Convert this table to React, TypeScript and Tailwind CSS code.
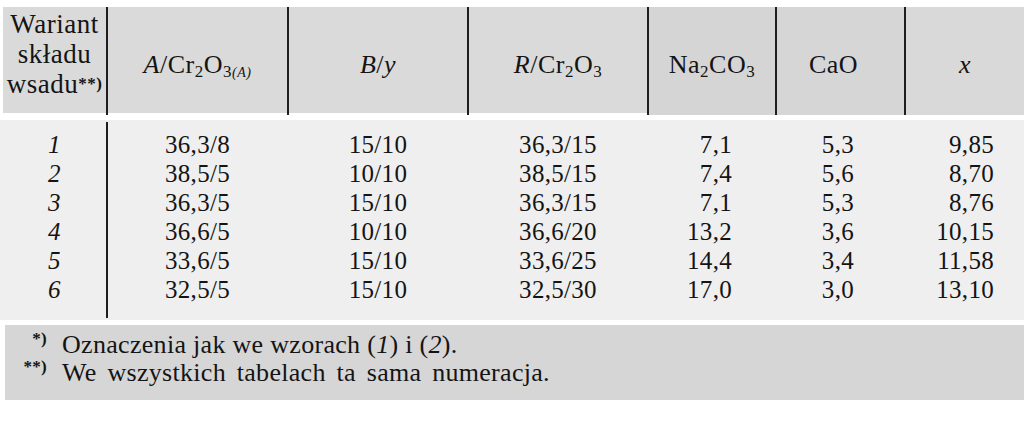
import React from "react";

const rows = [
  ["1", "36,3/8", "15/10", "36,3/15", "7,1", "5,3", "9,85"],
  ["2", "38,5/5", "10/10", "38,5/15", "7,4", "5,6", "8,70"],
  ["3", "36,3/5", "15/10", "36,3/15", "7,1", "5,3", "8,76"],
  ["4", "36,6/5", "10/10", "36,6/20", "13,2", "3,6", "10,15"],
  ["5", "33,6/5", "15/10", "33,6/25", "14,4", "3,4", "11,58"],
  ["6", "32,5/5", "15/10", "32,5/30", "17,0", "3,0", "13,10"],
];

const Sub = ({ children }: { children: React.ReactNode }) => (
  <sub className="text-[17px] relative bottom-[-0.28em] leading-none">{children}</sub>
);

export default function App() {
  const cols = "grid grid-cols-[103px_181px_180px_180px_128px_129px_1fr]";
  return (
    <div className="w-[1024px] h-[423px] bg-white overflow-hidden font-[family-name:'Liberation_Serif','Times_New_Roman',serif] text-[#141414] text-[25px] tracking-[0.3px]">
      {/* header */}
      <div className="pt-[7px] pl-[3px]">
        <div className={`${cols} h-[106px] bg-[#dadada] text-[26px] tracking-[0.5px]`}>
          <div className="flex flex-col items-center leading-[30px] pt-[2px] text-[27px]">
            <span>Wariant</span>
            <span>składu</span>
            <span>
              wsadu<sup className="text-[17px] relative top-[-0.25em] font-bold">**)</sup>
            </span>
          </div>
          <div className="border-l-2 border-[#1e1e1e] flex items-center justify-center pt-[6px] h-[108px]">
            <span>
              <i>A</i>/Cr<Sub>2</Sub>O<Sub>3<i className="text-[14px]">(A)</i></Sub>
            </span>
          </div>
          <div className="border-l-2 border-[#1e1e1e] flex items-center justify-center pt-[6px] h-[108px]">
            <span>
              <i>B</i>/<i>y</i>
            </span>
          </div>
          <div className="border-l-2 border-[#1e1e1e] flex items-center justify-center pt-[6px] h-[108px]">
            <span>
              <i>R</i>/Cr<Sub>2</Sub>O<Sub>3</Sub>
            </span>
          </div>
          <div className="border-l-2 border-[#1e1e1e] flex items-center justify-center pt-[6px] h-[108px] bg-[#d5d5d5]">
            <span>
              Na<Sub>2</Sub>CO<Sub>3</Sub>
            </span>
          </div>
          <div className="border-l-2 border-[#1e1e1e] flex items-center justify-center pt-[6px] pr-[14px] h-[108px] bg-[#d6d6d6]">
            <span>CaO</span>
          </div>
          <div className="border-l-2 border-[#1e1e1e] flex items-center justify-center pt-[6px] h-[108px] bg-[#d9d9d9]">
            <i>x</i>
          </div>
        </div>
      </div>

      {/* body */}
      <div className="mt-[7px] bg-[#efefef] h-[200px] pl-[3px]">
        <div className={`${cols} h-full`}>
          <div className="flex flex-col items-center pt-[10px] leading-[29px] italic">
            {rows.map((r) => (
              <span key={r[0]}>{r[0]}</span>
            ))}
          </div>
          <div className="border-l-2 border-[#1e1e1e] my-[2px] flex flex-col items-center pt-[8px] leading-[29px]">
            {rows.map((r) => (
              <span key={r[0]}>{r[1]}</span>
            ))}
          </div>
          <div className="flex flex-col items-center pt-[10px] leading-[29px] pl-[2px]">
            {rows.map((r) => (
              <span key={r[0]}>{r[2]}</span>
            ))}
          </div>
          <div className="flex flex-col items-center pt-[10px] leading-[29px] pl-[2px]">
            {rows.map((r) => (
              <span key={r[0]}>{r[3]}</span>
            ))}
          </div>
          <div className="flex flex-col items-end pt-[10px] leading-[29px] pr-[43px]">
            {rows.map((r) => (
              <span key={r[0]}>{r[4]}</span>
            ))}
          </div>
          <div className="flex flex-col items-end pt-[10px] leading-[29px] pr-[50px]">
            {rows.map((r) => (
              <span key={r[0]}>{r[5]}</span>
            ))}
          </div>
          <div className="flex flex-col items-end pt-[10px] leading-[29px] pr-[30px]">
            {rows.map((r) => (
              <span key={r[0]}>{r[6]}</span>
            ))}
          </div>
        </div>
      </div>

      {/* footer */}
      <div className="mt-[5px] ml-[5px] h-[75px] bg-[#d6d6d6] pt-[6px] leading-[28px] text-[26px]">
        <div className="flex">
          <span className="w-[42px] text-right text-[17px] font-bold relative top-[-6px]">*)</span>
          <span className="ml-[15px]">
            Oznaczenia jak we wzorach (<i>1</i>) i (<i>2</i>).
          </span>
        </div>
        <div className="flex">
          <span className="w-[42px] text-right text-[17px] font-bold relative top-[-6px]">**)</span>
          <span className="ml-[15px] [word-spacing:4px]">We wszystkich tabelach ta sama numeracja.</span>
        </div>
      </div>
    </div>
  );
}
